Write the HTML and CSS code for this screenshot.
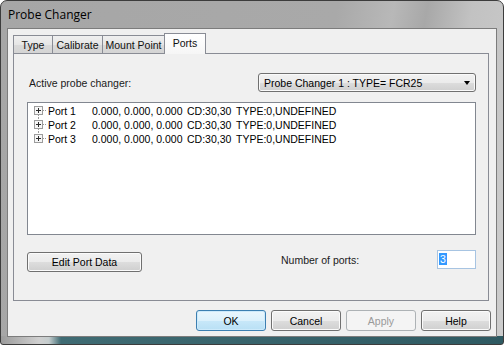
FILE: index.html
```html
<!DOCTYPE html>
<html lang="en">
<head>
  <meta charset="UTF-8">
  <title>Probe Changer</title>
  <link rel="stylesheet" href="styles.css">
</head>
<body>
  <div class="window">
    <div class="titlebar">Probe Changer</div>
    <div class="client">
      <div class="tabs">
        <div class="tab tab-type">Type</div>
        <div class="tab tab-cal">Calibrate</div>
        <div class="tab tab-mount">Mount Point</div>
        <div class="tab tab-ports active">Ports</div>
      </div>

      <div class="panel">
        <div class="row">
          <span class="label">Active probe changer:</span>
          <div class="combo">
            <span>Probe Changer 1 : TYPE= FCR25</span>
            <span class="arrow"></span>
          </div>
        </div>

        <ul class="tree">
          <li>
            <svg class="node" width="16" height="14" viewBox="0 0 16 14">
              <path d="M7.5 11 V14 M12 6.5 H16" stroke="#9a9a9a" stroke-dasharray="1 1"/>
              <rect x="3.5" y="2.5" width="8" height="8" fill="#f6f6f6" stroke="#9c9c9c"/>
              <path d="M5 6.5 H10 M7.5 4 V9" stroke="#2b2b2b"/>
            </svg>
            <span class="c1">Port</span><span class="c2">1</span><span class="c3">0.000, 0.000, 0.000</span><span class="c4">CD:30,30</span><span>TYPE:0,UNDEFINED</span>
          </li>
          <li>
            <svg class="node" width="16" height="14" viewBox="0 0 16 14">
              <path d="M7.5 0 V2 M7.5 11 V14 M12 6.5 H16" stroke="#9a9a9a" stroke-dasharray="1 1"/>
              <rect x="3.5" y="2.5" width="8" height="8" fill="#f6f6f6" stroke="#9c9c9c"/>
              <path d="M5 6.5 H10 M7.5 4 V9" stroke="#2b2b2b"/>
            </svg>
            <span class="c1">Port</span><span class="c2">2</span><span class="c3">0.000, 0.000, 0.000</span><span class="c4">CD:30,30</span><span>TYPE:0,UNDEFINED</span>
          </li>
          <li>
            <svg class="node" width="16" height="14" viewBox="0 0 16 14">
              <path d="M7.5 0 V2 M12 6.5 H16" stroke="#9a9a9a" stroke-dasharray="1 1"/>
              <rect x="3.5" y="2.5" width="8" height="8" fill="#f6f6f6" stroke="#9c9c9c"/>
              <path d="M5 6.5 H10 M7.5 4 V9" stroke="#2b2b2b"/>
            </svg>
            <span class="c1">Port</span><span class="c2">3</span><span class="c3">0.000, 0.000, 0.000</span><span class="c4">CD:30,30</span><span>TYPE:0,UNDEFINED</span>
          </li>
        </ul>

        <div class="row-bottom">
          <button class="btn btn-edit">Edit Port Data</button>
          <div class="ports-field">
            <span class="ports-label">Number of ports:</span>
            <div class="num"><span class="sel">3</span></div>
          </div>
        </div>
      </div>

      <div class="actions">
        <button class="btn btn-default">OK</button>
        <button class="btn">Cancel</button>
        <button class="btn" disabled>Apply</button>
        <button class="btn">Help</button>
      </div>
    </div>
  </div>
</body>
</html>
```

FILE: styles.css
```css
* {
  box-sizing: border-box;
}

body {
  margin: 0;
  background: #fff;
  font-family: "Liberation Sans", Arial, sans-serif;
  font-size: 10.5px;
  color: #000;
}

.window {
  width: 504px;
  height: 345px;
  display: flex;
  flex-direction: column;
  padding: 0 6px 7px 6px;
  border: 1px solid #3c3c3c;
  border-radius: 7px 7px 3px 3px;
  background:
    linear-gradient(to right, #9c9c9c 0, #d0d0d0 38px, #c4cccd 48px, #3f6b73 60px, #2f5a62 100%) bottom / 100% 8px no-repeat,
    linear-gradient(100deg, #a6a6a6 0%, #a9a9a9 60%, #b8b8b8 70%, #a8a8a8 76%, #c2c2c2 84%, #cdcdcd 100%);
}

.titlebar {
  height: 27px;
  line-height: 27px;
  padding-left: 1px;
  font-family: "Open Sans", "Noto Sans", sans-serif;
  font-size: 12px;
  color: #000;
}

.client {
  height: 309px;
  background: #f0f0f0;
  border: 1px solid #7c7c7c;
  display: flex;
  flex-direction: column;
}

/* tab strip */
.tabs {
  display: flex;
  align-items: flex-end;
  height: 25px;
  padding-left: 5px;
  margin-bottom: -1px;
  position: relative;
  z-index: 1;
}

.tab {
  height: 18px;
  margin-bottom: 1px;
  border: 1px solid #898c95;
  border-bottom: none;
  background: linear-gradient(#f0f0f0, #e6e6e6 50%, #dadada 51%, #d4d4d4);
  text-align: center;
  line-height: 18px;
  color: #111;
}

.tab + .tab {
  margin-left: -1px;
}

.tab-type { width: 40px; }
.tab-cal { width: 51px; }
.tab-mount { width: 63px; }

.tab.active {
  width: 42px;
  height: 21px;
  margin-bottom: 0;
  line-height: 18px;
  background: linear-gradient(#ffffff, #f6f6f6);
}

/* tab page */
.panel {
  height: 248px;
  margin: 0 7px 0 5px;
  border: 1px solid #898c95;
  background: #f0f0f0;
  padding: 19px 12px 0 13px;
}

.row {
  display: flex;
  align-items: center;
  justify-content: space-between;
  height: 19px;
}

.label {
  padding-left: 2px;
  color: #1a1a1a;
}

.combo {
  width: 218px;
  height: 19px;
  border: 1px solid #707070;
  border-radius: 3px;
  background: linear-gradient(#f2f2f2, #ebebeb 50%, #dddddd 51%, #cfcfcf);
  box-shadow: inset 0 0 0 1px #fafafa;
  padding: 0 4px 0 5px;
  display: flex;
  align-items: center;
  justify-content: space-between;
}

.arrow {
  width: 0;
  height: 0;
  border-top: 4px solid #000;
  border-left: 3.5px solid transparent;
  border-right: 3.5px solid transparent;
  margin-right: 1px;
}

.tree {
  list-style: none;
  margin: 10px 0 0 0;
  height: 133px;
  border: 1px solid #828790;
  background: #fff;
  padding: 1px 0 0 3px;
}

.tree li {
  display: flex;
  align-items: center;
  height: 14px;
  white-space: nowrap;
}

.node {
  margin-right: 1px;
  flex: none;
}

.c1 { width: 22px; }
.c2 { width: 22px; }
.c3 { width: 95px; }
.c4 { width: 49px; }

.row-bottom {
  display: flex;
  align-items: flex-start;
  margin-top: 15px;
}

.ports-field {
  margin-left: auto;
  display: flex;
  align-items: center;
  height: 19px;
}

.ports-label {
  width: 156px;
  color: #1a1a1a;
}

.num {
  width: 39px;
  height: 19px;
  border: 1px solid #a7c4e2;
  background: #fff;
  padding: 2px 0 0 1px;
}

.sel {
  background: #3399ff;
  color: #fff;
  padding: 0 1px;
}

/* buttons */
.btn {
  font: inherit;
  color: #000;
  height: 21px;
  width: 70px;
  padding: 0;
  border: 1px solid #707070;
  border-radius: 3px;
  background: linear-gradient(#f2f2f2, #ebebeb 50%, #dddddd 51%, #cfcfcf);
  box-shadow: inset 0 0 0 1px #fbfbfb;
}

.btn-edit {
  width: 115px;
  height: 20px;
  margin-top: 2px;
}

.btn-default {
  border-color: #3c7fb1;
  background: linear-gradient(#eaf6fd, #dcf1fc 50%, #c8e8f9 51%, #b9e0f5);
  box-shadow: inset 0 0 0 1px #cdeafb;
}

.btn:disabled {
  color: #9a9a9a;
  border-color: #adb2b5;
  background: #f4f4f4;
  box-shadow: none;
}

.actions {
  display: flex;
  justify-content: flex-end;
  gap: 5px;
  padding-right: 5px;
  margin-top: 9px;
}
```
